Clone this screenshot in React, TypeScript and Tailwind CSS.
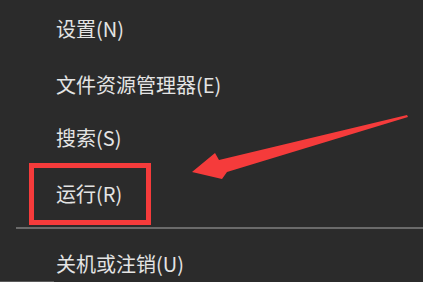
import React from "react";

// Windows 10 Win+X context menu, with the "运行" entry annotated.

const font = { fontFamily: '"Noto Sans CJK SC", "Noto Sans", sans-serif' };

function Item({ label }: { label: string }) {
  return <span className="text-[20px] leading-[24px] text-[#e4e4e4]">{label}</span>;
}

export default function App() {
  return (
    <div className="relative w-[423px] h-[282px] overflow-hidden bg-[#2b2b2b]" style={font}>
      <div className="flex flex-col">
        <div className="h-[58px] flex items-center pl-[56px]">
          <Item label="设置(N)" />
        </div>
        <div className="h-[54px] flex items-center pl-[56px]">
          <Item label="文件资源管理器(E)" />
        </div>
        <div className="h-[51px] flex items-center pl-[56px]">
          <Item label="搜索(S)" />
        </div>
        <div className="ml-[29px] w-[122px] h-[62px] border-[5px] border-[#f53b3b] flex items-center pl-[22px]">
          <Item label="运行(R)" />
        </div>
        <div className="mt-[2px] ml-[16px] h-[2px] bg-[#6a6a6a]" />
        <div className="h-[52px] flex items-center pl-[56px] pt-[18px]">
          <Item label="关机或注销(U)" />
        </div>
        <div className="w-[54px] h-px bg-[#5a5a5a]" />
      </div>

      {/* annotation arrow */}
      <svg className="absolute left-0 top-0" width="423" height="282" viewBox="0 0 423 282">
        <polygon
          points="192,172 215,153 219,160 407,115 408,117 227,172 222,179"
          fill="#f53b3b"
        />
      </svg>
    </div>
  );
}
